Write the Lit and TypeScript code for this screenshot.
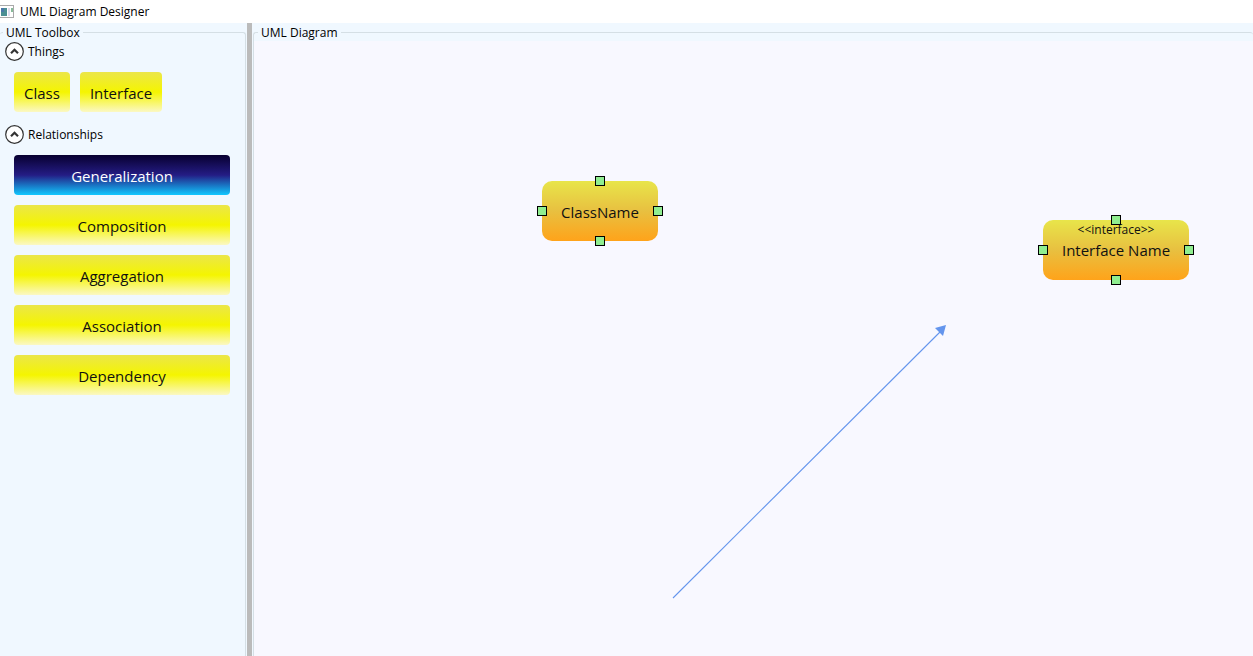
import { LitElement, html, css } from "lit";
import { customElement, property, state } from "lit/decorators.js";
import { classMap } from "lit/directives/class-map.js";
import { styleMap } from "lit/directives/style-map.js";

interface DiagramNode {
  name: string;
  stereotype?: string;
  x: number;
  y: number;
  width: number;
}

const THINGS = ["Class", "Interface"];
const RELATIONSHIPS = ["Generalization", "Composition", "Aggregation", "Association", "Dependency"];
const NODES: DiagramNode[] = [
  { name: "ClassName", x: 288, y: 140, width: 116 },
  { name: "Interface Name", stereotype: "<<interface>>", x: 789, y: 179, width: 146 },
];

@customElement("uml-expander")
export class UmlExpander extends LitElement {
  @property() label = "";
  @state() private open = true;

  static styles = css`
    :host { display: block; }
    .header {
      display: flex;
      align-items: center;
      gap: 4px;
      height: 21px;
      padding: 0;
      border: 0;
      background: none;
      color: #000;
      font: inherit;
    }
    .chevron { display: block; }
    .closed .chevron { transform: rotate(180deg); }
    .content { padding: 10px 9px 12px; }
  `;

  render() {
    return html`
      <div class=${classMap({ closed: !this.open })}>
        <button class="header" aria-expanded=${this.open} @click=${() => (this.open = !this.open)}>
          <svg class="chevron" width="19" height="19" viewBox="0 0 19 19" fill="none" aria-hidden="true">
            <circle cx="9.5" cy="9.5" r="8.8" fill="#fff" stroke="#333" stroke-width="1.2" />
            <path d="M6 11.2 9.5 7.8 13 11.2" stroke="#333" stroke-width="2.2" />
          </svg>
          <span>${this.label}</span>
        </button>
        ${this.open ? html`<div class="content"><slot></slot></div>` : null}
      </div>
    `;
  }
}

@customElement("uml-node")
export class UmlNode extends LitElement {
  @property() name = "";
  @property() stereotype = "";

  static styles = css`
    :host { display: block; }
    .box {
      position: relative;
      box-sizing: border-box;
      display: flex;
      flex-direction: column;
      align-items: center;
      justify-content: center;
      height: 60px;
      padding-top: 2px;
      border-radius: 10px;
      background: linear-gradient(#e8e54a, #e8c040 50%, #ffa31a);
      color: #111;
    }
    .stereotype { font-size: 12px; line-height: 16px; }
    .name { font-size: 15px; line-height: 24px; }
    .tagged { justify-content: flex-start; }
    .handle {
      position: absolute;
      box-sizing: border-box;
      width: 10px;
      height: 10px;
      border: 1px solid #000;
      background: #90ee90;
    }
    .top { top: -5px; left: calc(50% - 5px); }
    .bottom { bottom: -5px; left: calc(50% - 5px); }
    .left { left: -5px; top: calc(50% - 5px); }
    .right { right: -5px; top: calc(50% - 5px); }
  `;

  render() {
    return html`
      <div class=${classMap({ box: true, tagged: !!this.stereotype })}>
        ${this.stereotype ? html`<span class="stereotype">${this.stereotype}</span>` : null}
        <span class="name">${this.name}</span>
        ${["top", "right", "bottom", "left"].map((side) => html`<span class="handle ${side}"></span>`)}
      </div>
    `;
  }
}

@customElement("app-root")
export class AppRoot extends LitElement {
  @state() private tool = "Generalization";

  static styles = css`
    :host {
      display: flex;
      flex-direction: column;
      height: 100vh;
      overflow: hidden;
      background: #f0f8ff;
      color: #000;
      font: 12px/16px "Open Sans", "Noto Sans", sans-serif;
    }
    .titlebar {
      display: flex;
      align-items: center;
      gap: 6px;
      height: 23px;
      flex: none;
      background: #fff;
    }
    .title { margin: 0; font: inherit; }
    .workspace {
      flex: 1;
      min-height: 0;
      display: grid;
      grid-template-columns: 247px 5px 1fr;
    }
    .group {
      min-width: 0;
      margin: 0;
      border: 1px solid #d5dfe5;
      border-bottom: 0;
      border-radius: 3px 3px 0 0;
      padding: 0;
    }
    .toolbox { margin-right: 1px; border-left: 0; padding-left: 5px; }
    .diagram { margin-left: 1px; border-right: 0; display: flex; flex-direction: column; }
    .group legend { padding: 1px 3px 0; height: 17px; line-height: 18px; }
    .toolbox legend { margin-left: -2px; }
    .diagram legend { margin-left: 4px; }
    .splitter { background: #bbb; }
    .row { display: flex; gap: 10px; }
    .stack { display: grid; gap: 10px; margin-right: 6px; }
    .tool {
      height: 40px;
      border: 0;
      border-radius: 4px;
      padding: 1px 10px 0;
      background: linear-gradient(#ebe64a, #f5f500 50%, #fbf8c4);
      color: #111;
      font: inherit;
      font-size: 15px;
    }
    .selected {
      background: linear-gradient(#080030, #241c84 50%, #10c8ff);
      color: #fff;
    }
    .canvas { position: relative; flex: 1; background: #f8f8ff; }
    .node { position: absolute; }
    .edge { position: absolute; left: 418px; top: 284px; color: #6495ed; }
  `;

  private toolButton(name: string) {
    return html`<button
      class=${classMap({ tool: true, selected: this.tool === name })}
      aria-pressed=${this.tool === name}
      @click=${() => (this.tool = name)}
    >${name}</button>`;
  }

  render() {
    return html`
      <header class="titlebar">
        <svg width="14" height="14" viewBox="0 0 14 14" aria-hidden="true">
          <rect x="-2" y=".5" width="15.5" height="12" fill="#fff" stroke="#aaa" />
          <rect x="1" y="3" width="6" height="8" fill="#4b8f92" />
          <rect x="1" y="3" width="3" height="4" fill="#4a78a8" />
          <rect x="8" y="3" width="2" height="8" fill="#dde" />
          <rect x="11" y="3" width="2" height="4" fill="#8b9" />
        </svg>
        <h1 class="title">UML Diagram Designer</h1>
      </header>
      <main class="workspace">
        <fieldset class="group toolbox">
          <legend>UML Toolbox</legend>
          <uml-expander label="Things">
            <div class="row">${THINGS.map((name) => this.toolButton(name))}</div>
          </uml-expander>
          <uml-expander label="Relationships">
            <div class="stack">${RELATIONSHIPS.map((name) => this.toolButton(name))}</div>
          </uml-expander>
        </fieldset>
        <div class="splitter" role="separator" aria-orientation="vertical"></div>
        <fieldset class="group diagram">
          <legend>UML Diagram</legend>
          <div class="canvas">
            <svg class="edge" width="276" height="276" viewBox="0 0 276 276" aria-hidden="true">
              <path d="M1 273 270 5" stroke="currentColor" stroke-width="1.1" />
              <path d="M274 0 263 3 271 11Z" fill="currentColor" />
            </svg>
            ${NODES.map(
              (n) => html`<uml-node
                class="node"
                name=${n.name}
                stereotype=${n.stereotype ?? ""}
                style=${styleMap({ left: `${n.x}px`, top: `${n.y}px`, width: `${n.width}px` })}
              ></uml-node>`,
            )}
          </div>
        </fieldset>
      </main>
    `;
  }
}
